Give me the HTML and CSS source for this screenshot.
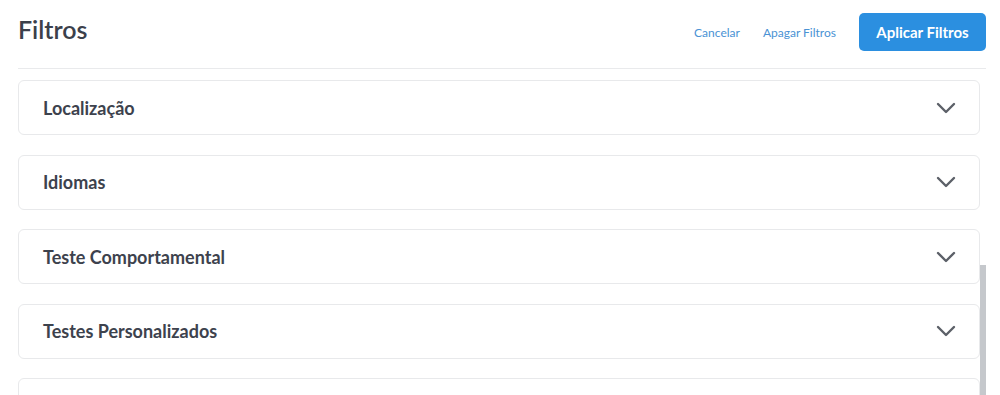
FILE: index.html
```html
<!DOCTYPE html>
<html lang="pt">

<head>
    <meta charset="UTF-8">
    <title>Filtros</title>
    <link rel="stylesheet" href="styles.css">
</head>

<body>
    <div class="panel">
        <div class="header">
            <h1 class="title">Filtros</h1>
            <div class="actions">
                <a class="link">Cancelar</a>
                <a class="link">Apagar Filtros</a>
                <button class="btn-apply">Aplicar Filtros</button>
            </div>
        </div>
        <div class="list">
            <div class="card">
                <span class="card-title">Localização</span>
                <svg class="chevron" viewBox="0 0 20 12"><path d="M2 2l8 8 8-8" /></svg>
            </div>
            <div class="card">
                <span class="card-title">Idiomas</span>
                <svg class="chevron" viewBox="0 0 20 12"><path d="M2 2l8 8 8-8" /></svg>
            </div>
            <div class="card">
                <span class="card-title">Teste Comportamental</span>
                <svg class="chevron" viewBox="0 0 20 12"><path d="M2 2l8 8 8-8" /></svg>
            </div>
            <div class="card">
                <span class="card-title">Testes Personalizados</span>
                <svg class="chevron" viewBox="0 0 20 12"><path d="M2 2l8 8 8-8" /></svg>
            </div>
            <div class="card">
                <span class="card-title"></span>
            </div>
        </div>
        <div class="scroll-thumb"></div>
    </div>
</body>

</html>
```

FILE: styles.css
```css
* {
    margin: 0;
    padding: 0;
    box-sizing: border-box;
}

body {
    background: #fff;
    font-family: "Source Sans Pro", Lato, "Noto Sans", sans-serif;
    overflow: hidden;
    height: 395px;
}

.panel {
    position: relative;
    padding: 0 14px 0 18px;
    height: 395px;
    overflow: hidden;
}

.header {
    display: flex;
    align-items: center;
    justify-content: space-between;
    height: 69px;
    padding-bottom: 4px;
    border-bottom: 1px solid #e9eaec;
}

.title {
    font-size: 25px;
    font-weight: 600;
    color: #3b404b;
    margin-top: -6px;
}

.actions {
    display: flex;
    align-items: center;
}

.link {
    font-size: 12px;
    color: #4a92d4;
    margin-right: 23px;
    cursor: pointer;
}

.btn-apply {
    font-family: inherit;
    font-size: 15px;
    font-weight: 700;
    color: #fff;
    background: #2b8fe0;
    border: none;
    border-radius: 5px;
    width: 127px;
    height: 38px;
    margin-top: -1px;
}

.list {
    display: flex;
    flex-direction: column;
    gap: 19.5px;
    padding-top: 11px;
    width: 962px;
}

.card {
    display: flex;
    align-items: center;
    justify-content: space-between;
    height: 55px;
    padding: 0 23px 0 24px;
    border: 1px solid #e8e9eb;
    border-radius: 6px;
    flex-shrink: 0;
}

.card-title {
    font-size: 18px;
    font-weight: 700;
    color: #3d424d;
}

.chevron {
    width: 20px;
    height: 12px;
    fill: none;
    stroke: #5c6068;
    stroke-width: 2.4;
    stroke-linecap: round;
    stroke-linejoin: round;
}

.scroll-thumb {
    position: absolute;
    left: 980px;
    top: 265px;
    width: 6px;
    height: 140px;
    background: #c5c8cc;
}
```
